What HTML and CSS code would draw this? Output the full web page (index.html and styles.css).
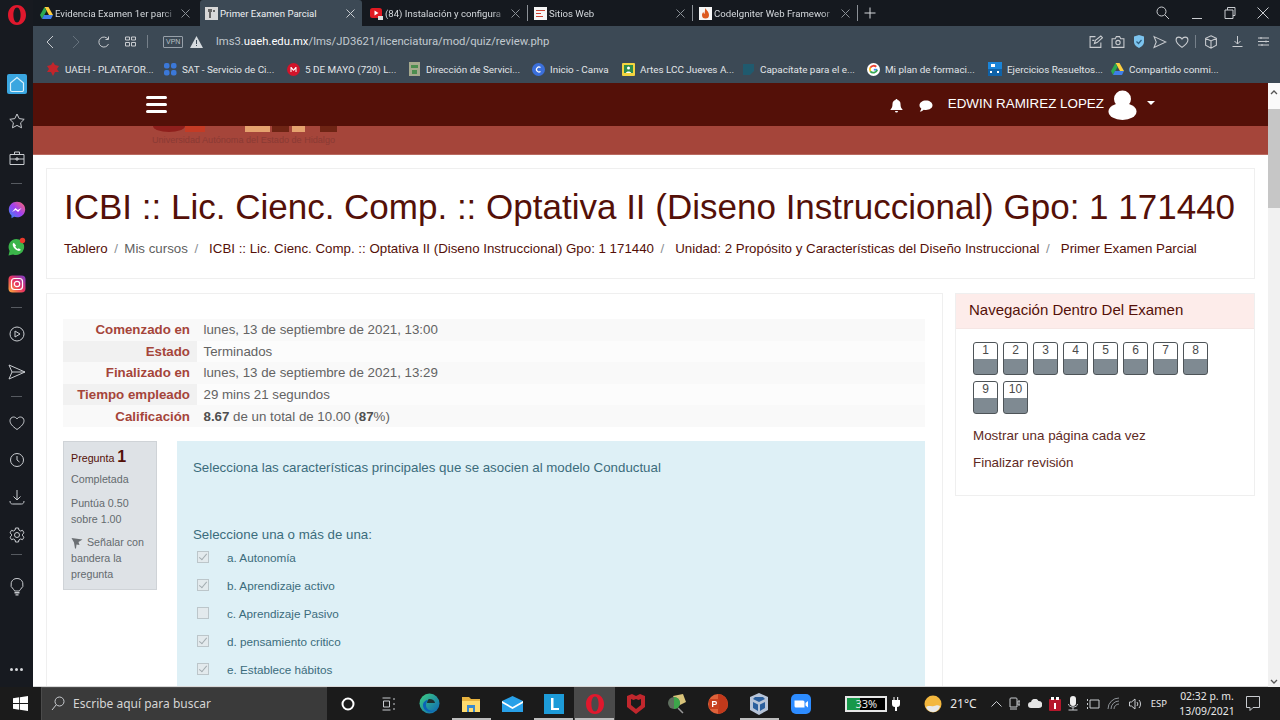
FILE: index.html
```html
<!DOCTYPE html>
<html lang="es">
<head>
<meta charset="utf-8">
<title>Primer Examen Parcial</title>
<link rel="stylesheet" href="styles.css">
</head>
<body>
<div class="window">
  <div class="upper">
    <aside class="sidebar">
      <div class="opera-slot">
        <svg width="20" height="22" viewBox="0 0 20 22"><path fill="#e0182d" fill-rule="evenodd" d="M10 1C4.500 1 1 5.500 1 11s3.500 10 9 10 9-4.500 9-10S15.500 1 10 1zm0 2.500c2.200 0 3.600 3.300 3.600 7.500s-1.400 7.500-3.600 7.500S6.400 15.200 6.400 11 7.800 3.500 10 3.500z"/></svg>
      </div>
      <div class="side-item home"><span class="home-box"><svg width="18" height="18" viewBox="0 0 18 18"><path fill="none" stroke="#d8f0fb" stroke-width="1.200" d="M2.500 8 9 2.500 15.500 8v7a1.500 1.500 0 0 1-1.500 1.500H4A1.500 1.500 0 0 1 2.500 15z"/></svg></span></div>
      <div class="side-item"><svg width="18" height="18" viewBox="0 0 18 18"><path class="ln" d="m9 2 2.200 4.600 5 .7-3.600 3.500.9 5L9 13.400l-4.500 2.400.9-5-3.600-3.500 5-.7z"/></svg></div>
      <div class="side-item"><svg width="18" height="18" viewBox="0 0 18 18"><path class="ln" d="M2 5.500h14v10H2zM6.500 5.500V3h5v2.500M2 10h14M8 9h2v2H8z"/></svg></div>
      <div class="side-sep"></div>
      <div class="side-item"><svg width="18" height="18" viewBox="0 0 18 18"><defs><linearGradient id="ms" x1="0" y1="1" x2="1" y2="0"><stop offset="0" stop-color="#2a8cf5"/><stop offset=".5" stop-color="#a03ff0"/><stop offset="1" stop-color="#ff6a6a"/></linearGradient></defs><path fill="url(#ms)" d="M9 .8C4.300.8.800 4.200.800 8.600c0 2.400 1 4.400 2.700 5.800v2.800l2.600-1.400c.9.300 1.900.4 2.900.4 4.700 0 8.200-3.400 8.200-7.800S13.700.8 9 .8z"/><path fill="#fff" d="m4 11 3.500-4 2.300 2 3.800-2-3.500 4-2.400-2z"/></svg></div>
      <div class="side-item"><svg width="20" height="20" viewBox="0 0 20 20"><path fill="#3bb54a" d="M9.500 2a8 8 0 0 0-6.900 12L1.500 18.500l4.600-1.100A8 8 0 1 0 9.500 2z"/><path fill="#fff" d="M6.800 5.800c-.9.500-1.300 1.500-1 2.700.6 2.400 2.900 4.800 5.300 5.300 1.300.3 2.300-.2 2.700-1.100l-2-1.500-1 .8c-1-.4-2.100-1.600-2.500-2.500l.8-1.100z"/><circle cx="15.500" cy="3.500" r="2.700" fill="#ea3a2c"/></svg></div>
      <div class="side-item"><svg width="18" height="18" viewBox="0 0 18 18"><defs><linearGradient id="ig" x1="0" y1="1" x2="1" y2="0"><stop offset="0" stop-color="#fdb13b"/><stop offset=".5" stop-color="#e8325f"/><stop offset="1" stop-color="#7a3fd0"/></linearGradient></defs><rect x=".5" y=".5" width="17" height="17" rx="4" fill="url(#ig)"/><rect x="3.500" y="3.500" width="11" height="11" rx="3" fill="none" stroke="#fff" stroke-width="1.200"/><circle cx="9" cy="9" r="2.700" fill="none" stroke="#fff" stroke-width="1.200"/></svg></div>
      <div class="side-sep s1"></div>
      <div class="side-item tall"><svg width="18" height="18" viewBox="0 0 18 18"><circle class="ln" cx="9" cy="9" r="7"/><path class="ln" d="M7 6v6l5-3z"/></svg></div>
      <div class="side-item"><svg width="20" height="18" viewBox="0 0 20 18"><path class="ln" d="m2 2 16 7-16 7 3-7zM5 9h13"/></svg></div>
      <div class="side-sep s2"></div>
      <div class="side-item"><svg width="18" height="18" viewBox="0 0 18 18"><path class="ln" d="M9 15.500C4 12 2 9.500 2 6.700 2 4.500 3.700 3 5.600 3 7 3 8.300 3.800 9 5c.7-1.200 2-2 3.400-2C14.300 3 16 4.500 16 6.700c0 2.800-2 5.300-7 8.800z"/></svg></div>
      <div class="side-item"><svg width="18" height="18" viewBox="0 0 18 18"><circle class="ln" cx="9" cy="9" r="6.500"/><path class="ln" d="M9 5v4l2.500 2"/></svg></div>
      <div class="side-item tall"><svg width="18" height="18" viewBox="0 0 18 18"><path class="ln" d="M9 2v10M5.500 8.500 9 12l3.500-3.500M2 13c0 2 1 3 2.500 3h9c1.500 0 2.500-1 2.500-3"/></svg></div>
      <div class="side-item"><svg width="18" height="18" viewBox="0 0 18 18"><path class="ln" d="m7.500 2-.4 2-1.700 1-1.900-.7L2 6.800l1.500 1.400v1.600L2 11.200l1.500 2.500 1.900-.7 1.700 1 .4 2h3l.4-2 1.700-1 1.900.7 1.500-2.500-1.500-1.400V8.200L16 6.800l-1.500-2.500-1.900.7-1.700-1-.4-2z"/><circle class="ln" cx="9" cy="9" r="2.500"/></svg></div>
      <div class="side-sep bulb-sep"></div>
      <div class="side-item bulb"><svg width="16" height="20" viewBox="0 0 16 20"><path class="ln" d="M8 1.500a6 6 0 0 0-3.500 10.900c.6.500 1 1.100 1 1.600h5c0-.5.400-1.100 1-1.600A6 6 0 0 0 8 1.500z"/><path fill="#c9ccd0" d="M5.500 15h5v1.500h-5zM6.500 17.200h3v1.300h-3z"/></svg></div>
      <div class="side-dots"><i></i><i></i><i></i></div>
    </aside>

    <div class="browser">
      <header class="tabbar">
        <div class="tab t1"><svg class="fav" width="13" height="12" viewBox="0 0 13 12"><path fill="#ffcf3f" d="M4.500 0h4l4.500 8H9z"/><path fill="#2da94f" d="M4.500 0 0 8l2 4 4.500-8z"/><path fill="#3f7ee8" d="M2 12h9l2-4H4z"/></svg><span class="tab-title">Evidencia Examen 1er parci</span><svg class="tab-x" width="9" height="9" viewBox="0 0 9 9"><path d="m.5.500 8 8M8.500.500l-8 8"/></svg></div>
        <div class="tab active"><svg class="fav" width="13" height="13" viewBox="0 0 13 13"><rect width="13" height="13" fill="#d8d8d8"/><path fill="#666" d="M3 2h4v3H6v6H4V5H3zM8 3h2v2H8z"/></svg><span class="tab-title">Primer Examen Parcial</span><svg class="tab-x" width="9" height="9" viewBox="0 0 9 9"><path d="m.5.500 8 8M8.500.500l-8 8"/></svg></div>
        <div class="tab t3"><svg class="fav" width="13" height="13" viewBox="0 0 13 13"><rect y="1" width="12" height="10" rx="2.500" fill="#e01a22"/><path fill="#fff" d="m4.500 3.500 4 2.500-4 2.500z"/><path fill="#ddd" d="M8 9h5v4H8z"/></svg><span class="tab-title">(84) Instalación y configura</span><svg class="tab-x" width="9" height="9" viewBox="0 0 9 9"><path d="m.5.500 8 8M8.500.500l-8 8"/></svg></div>
        <div class="tab sep"><svg class="fav" width="13" height="13" viewBox="0 0 13 13"><rect width="13" height="13" fill="#f5f5f5"/><path fill="#c43" d="M2 3h9v1H2zM2 6h5v1H2zM2 9h7v1H2z"/></svg><span class="tab-title">Sitios Web</span><svg class="tab-x" width="9" height="9" viewBox="0 0 9 9"><path d="m.5.500 8 8M8.500.500l-8 8"/></svg></div>
        <div class="tab sep"><svg class="fav" width="13" height="13" viewBox="0 0 13 13"><rect width="13" height="13" fill="#f7f7f7"/><path fill="#dd5a20" d="M6.500 1c.5 2 3.500 3.500 3.500 7a3.500 3.500 0 0 1-7 0c0-1.500.8-2.300 1.500-3 0 1 .3 1.500 1 2C6 5 5.800 3 6.500 1z"/></svg><span class="tab-title">CodeIgniter Web Framewor</span><svg class="tab-x" width="9" height="9" viewBox="0 0 9 9"><path d="m.5.500 8 8M8.500.500l-8 8"/></svg></div>
        <div class="tab-plus"><svg width="12" height="12" viewBox="0 0 12 12"><path stroke="#d5d8dc" d="M6 .5v11M.5 6h11"/></svg></div>
        <div class="win-ctrls">
          <svg width="14" height="14" viewBox="0 0 14 14"><circle class="ln" cx="5.500" cy="5.500" r="4.500"/><path class="ln" d="m9 9 4 4"/></svg>
          <svg width="12" height="14" viewBox="0 0 12 14"><path class="ln" d="M1 12.500h10"/></svg>
          <svg width="12" height="12" viewBox="0 0 12 12"><path class="ln" d="M1 3h8v8.500H1zM3.500 3V.5H11v8H9"/></svg>
          <svg width="12" height="12" viewBox="0 0 12 12"><path class="ln" d="m.5.500 11 11M11.500.500l-11 11"/></svg>
        </div>
      </header>

      <div class="addressbar">
        <svg width="8" height="14" viewBox="0 0 8 14"><path class="ln" d="M7 1 1 7l6 6"/></svg>
        <svg class="forward" width="8" height="14" viewBox="0 0 8 14"><path fill="none" stroke="#66727d" d="m1 1 6 6-6 6"/></svg>
        <svg class="reload" width="12" height="12" viewBox="0 0 12 12"><path class="ln" d="M10.500 8A5 5 0 1 1 10 3.200M10.500.500v3h-3"/></svg>
        <svg class="speed" width="11" height="11" viewBox="0 0 11 11"><path class="ln" d="M.5 1h4v3h-4zM6.500 1h4v3h-4zM.5 6.500h4V10h-4zM6.500 6.500h4V10h-4z"/></svg>
        <span class="bar-sep"></span>
        <span class="vpn">VPN</span>
        <svg class="warn" width="13" height="12" viewBox="0 0 13 12"><path fill="#d5dade" d="M6.500 0 13 12H0z"/><path fill="#3c4955" d="M6 4h1v4H6zM6 9h1v1H6z"/></svg>
        <div class="url">lms3.<b>uaeh.edu.mx</b>/lms/JD3621/licenciatura/mod/quiz/review.php</div>
        <div class="addr-tools">
          <svg width="14" height="14" viewBox="0 0 13 13"><path class="ln" d="M6 1.500H1v10h10V7M5 8l1-3 5-4 1.500 1.500-5 4.500zM3 5h2"/></svg>
          <svg width="14" height="14" viewBox="0 0 13 13"><path class="ln" d="M1 3.500h3l1-2h3l1 2h3v8H1z"/><circle class="ln" cx="6.500" cy="7" r="2"/></svg>
          <svg width="12" height="13" viewBox="0 0 12 13"><path fill="#7cc4ef" d="M1 1.500 6 0l5 1.500V7c0 3-3 5-5 6-2-1-5-3-5-6z"/><path fill="none" stroke="#2d5f82" stroke-width="1.200" d="m3.500 6.500 2 2 3-3.500"/></svg>
          <svg width="14" height="14" viewBox="0 0 13 13"><path class="ln" d="m1 1.500 11 5-11 5 2-5z"/></svg>
          <svg width="14" height="14" viewBox="0 0 13 13"><path class="ln" d="M6.500 11.500C3 9 1 7 1 4.700 1 3 2.300 2 3.600 2c1.200 0 2.300.7 2.900 1.800C7.100 2.700 8.200 2 9.400 2 10.700 2 12 3 12 4.700c0 2.300-2 4.300-5.500 6.800z"/></svg>
          <span class="bar-sep tool-sep"></span>
          <svg width="14" height="14" viewBox="0 0 13 13"><path class="ln" d="m6.500.8 5 2.200v6.500l-5 2.700-5-2.700V3zM1.500 3l5 2.500 5-2.500M6.500 5.500v7"/></svg>
          <svg class="wide-gap" width="13" height="13" viewBox="0 0 13 13"><path class="ln" d="M6.500 1v8M3.500 6l3 3 3-3M1.500 11.500h10"/></svg>
          <svg class="wide-gap" width="13" height="13" viewBox="0 0 13 13"><path class="ln" d="M1 3h11M1 6.500h11M1 10h11M4 2v2M9 5.500v2M5 9v2"/></svg>
        </div>
      </div>

      <nav class="bookmarks">
        <a class="bm w1"><svg width="14" height="14" viewBox="0 0 14 14"><path fill="#c2252b" d="m7 0 2 3 4 1-2 3 2 3-4 0-2 4-2-4-4 0 2-3-2-3 4-1z"/></svg>UAEH - PLATAFOR...</a>
        <a class="bm w2"><svg width="13" height="13" viewBox="0 0 13 13"><g fill="#3b78d8"><rect x="0" width="5.500" height="5.500" rx="2"/><rect x="7" width="5.500" height="5.500" rx="2"/><rect y="7" width="5.500" height="5.500" rx="2"/><rect x="7" y="7" width="5.500" height="5.500" rx="2"/></g></svg>SAT - Servicio de Ci...</a>
        <a class="bm w3"><svg width="13" height="13" viewBox="0 0 13 13"><circle cx="6.500" cy="6.500" r="6.500" fill="#d2142a"/><path fill="#fff" d="M3.500 9V4h1l2 2.500L8.500 4h1v5h-1V6L6.500 8 4.500 6v3z"/></svg>5 DE MAYO (720) L...</a>
        <a class="bm w4"><svg width="13" height="14" viewBox="0 0 13 14"><rect x="1" width="11" height="14" fill="#a5a98d"/><path fill="#4c8d4f" d="M3 3h7v3H3zM4 8h5v4H4z"/></svg>Dirección de Servici...</a>
        <a class="bm w5"><svg width="13" height="13" viewBox="0 0 13 13"><circle cx="6.500" cy="6.500" r="6.500" fill="#3b6fdb"/><path fill="none" stroke="#fff" stroke-width="1.200" d="M8.500 4.500a2.500 2.500 0 1 0 0 4"/></svg>Inicio - Canva</a>
        <a class="bm w6"><svg width="13" height="13" viewBox="0 0 13 13"><rect width="13" height="13" rx="1" fill="#f3d43f"/><rect x="2" y="2" width="9" height="8" fill="#2f8c4c"/><circle cx="6.500" cy="5" r="1.500" fill="#fff"/><path fill="#fff" d="M4 10c0-2 5-2 5 0z"/></svg>Artes LCC Jueves A...</a>
        <a class="bm w7"><svg width="13" height="13" viewBox="0 0 13 13"><path fill="#205a6e" d="M1 1h11v7l-4 4H1z"/></svg>Capacítate para el e...</a>
        <a class="bm w8"><svg width="13" height="13" viewBox="0 0 13 13"><circle cx="6.500" cy="6.500" r="6.500" fill="#fff"/><path fill="none" stroke="#4285f4" stroke-width="1.800" d="M10.200 6.700H6.800"/><path fill="none" stroke="#ea4335" stroke-width="1.800" d="M9.300 3.700a4 4 0 0 0-6 1"/><path fill="none" stroke="#fbbc05" stroke-width="1.800" d="M3.300 4.700a4 4 0 0 0 0 3.600"/><path fill="none" stroke="#34a853" stroke-width="1.800" d="M3.300 8.300a4 4 0 0 0 6.900-1.600"/></svg>Mi plan de formaci...</a>
        <a class="bm w9"><svg width="14" height="14" viewBox="0 0 14 14"><rect width="14" height="14" fill="#1a84d8"/><rect y="7" width="14" height="7" fill="#0f62a8"/><path fill="#fff" d="M2 9h2v2H2zM9 9h2v2H9zM3 2h4v3H3z"/></svg>Ejercicios Resueltos...</a>
        <a class="bm"><svg width="13" height="12" viewBox="0 0 13 12"><path fill="#ffcf3f" d="M4.500 0h4l4.500 8H9z"/><path fill="#2da94f" d="M4.500 0 0 8l2 4 4.500-8z"/><path fill="#3f7ee8" d="M2 12h9l2-4H4z"/></svg>Compartido conmi...</a>
      </nav>

      <div class="viewport">
        <div class="page">
          <div class="topnav">
            <div class="burger"><i></i><i></i><i></i></div>
            <div class="topnav-right">
              <svg class="bell" width="13" height="14" viewBox="0 0 13 14"><path fill="#fff" d="M6.500 0c.7 0 1 .5 1 1.100C9.500 1.600 10.500 3 10.500 5c0 3 .8 4.300 2 5.500V11H.5v-.5C1.700 9.300 2.500 8 2.500 5c0-2 1-3.400 3-3.900C5.500.5 5.800 0 6.500 0zM5 12h3a1.500 1.500 0 0 1-3 0z"/></svg>
              <svg class="chat" width="14" height="12" viewBox="0 0 14 12"><path fill="#fff" d="M7 .5c3.600 0 6.500 2.100 6.500 4.800S10.600 10 7 10c-.8 0-1.500-.1-2.200-.3C4 10.500 2.500 11.500.8 11.500c.9-.9 1.400-1.900 1.500-2.900C1 7.700.5 6.600.5 5.300.5 2.600 3.400.5 7 .5z"/></svg>
              <span class="username">EDWIN RAMIREZ LOPEZ</span>
              <svg class="avatar" width="29" height="30" viewBox="0 0 29 30"><circle cx="14.500" cy="9" r="8.500" fill="#fff"/><ellipse cx="14.500" cy="21.500" rx="14" ry="8.500" fill="#fff"/></svg>
              <span class="caret"></span>
            </div>
          </div>
          <div class="band">
            <div class="logo-strip"><i class="l1"></i><i class="l2"></i><i class="l3"></i><i class="l4"></i><i class="l5"></i><i class="l6"></i></div>
            <div class="logo-text">Universidad Autónoma del Estado de Hidalgo</div>
          </div>

          <div class="content">
            <section class="card head-card">
              <h1>ICBI :: Lic. Cienc. Comp. :: Optativa II (Diseno Instruccional) Gpo: 1 171440</h1>
              <ol class="crumbs">
                <li>Tablero</li>
                <li class="muted">Mis cursos</li>
                <li>ICBI :: Lic. Cienc. Comp. :: Optativa II (Diseno Instruccional) Gpo: 1 171440</li>
                <li>Unidad: 2 Propósito y Características del Diseño Instruccional</li>
                <li>Primer Examen Parcial</li>
              </ol>
            </section>

            <div class="columns">
              <main class="card main-card">
                <table class="summary">
                  <tr><th>Comenzado en</th><td>lunes, 13 de septiembre de 2021, 13:00</td></tr>
                  <tr class="alt"><th>Estado</th><td>Terminados</td></tr>
                  <tr><th>Finalizado en</th><td>lunes, 13 de septiembre de 2021, 13:29</td></tr>
                  <tr class="alt"><th>Tiempo empleado</th><td>29 mins 21 segundos</td></tr>
                  <tr><th>Calificación</th><td><b>8.67</b> de un total de 10.00 (<b>87</b>%)</td></tr>
                </table>
                <div class="question">
                  <div class="q-info">
                    <div class="q-no">Pregunta <b>1</b></div>
                    <div class="q-line first">Completada</div>
                    <div class="q-line">Puntúa 0.50 sobre 1.00</div>
                    <div class="q-flag"><svg width="12" height="12" viewBox="0 0 12 12"><path fill="#6b6f73" d="M.5 1 11.500 2.500 7.500 5l1 3-3-.5L5 11.500H4L3 5.500z"/></svg> Señalar con bandera la pregunta</div>
                  </div>
                  <div class="q-body">
                    <p class="q-text">Selecciona las características principales que se asocien al modelo Conductual</p>
                    <p class="q-prompt">Seleccione una o más de una:</p>
                    <label class="opt"><input type="checkbox" checked disabled><span>a. Autonomía</span></label>
                    <label class="opt"><input type="checkbox" checked disabled><span>b. Aprendizaje activo</span></label>
                    <label class="opt"><input type="checkbox" disabled><span>c. Aprendizaje Pasivo</span></label>
                    <label class="opt"><input type="checkbox" checked disabled><span>d. pensamiento critico</span></label>
                    <label class="opt"><input type="checkbox" checked disabled><span>e. Establece hábitos</span></label>
                  </div>
                </div>
              </main>
              <aside class="card nav-card">
                <h2>Navegación Dentro Del Examen</h2>
                <div class="nav-body">
                  <div class="qnav">
                    <span class="qbtn">1</span><span class="qbtn">2</span><span class="qbtn">3</span><span class="qbtn">4</span><span class="qbtn">5</span><span class="qbtn">6</span><span class="qbtn">7</span><span class="qbtn">8</span><span class="qbtn">9</span><span class="qbtn">10</span>
                  </div>
                  <p class="nav-link">Mostrar una página cada vez</p>
                  <p class="nav-link">Finalizar revisión</p>
                </div>
              </aside>
            </div>
          </div>
        </div>
        <div class="scrollbar">
          <div class="sb-btn"><svg width="8" height="5" viewBox="0 0 8 5"><path fill="none" stroke="#555" stroke-width="1.300" d="m1 4 3-3 3 3"/></svg></div>
          <div class="sb-thumb"></div>
          <div class="sb-track"></div>
          <div class="sb-btn down"><svg width="8" height="5" viewBox="0 0 8 5"><path fill="none" stroke="#555" stroke-width="1.300" d="m1 1 3 3 3-3"/></svg></div>
        </div>
      </div>
    </div>
  </div>

  <footer class="taskbar">
    <div class="start"><svg width="15" height="15" viewBox="0 0 15 15"><path fill="#fff" d="M0 2.200 6.200 1.300v5.800H0zM7 1.200 15 0v7.100H7zM0 7.900h6.200v5.800L0 12.800zM7 7.900h8V15l-8-1.200z"/></svg></div>
    <div class="search"><svg width="14" height="15" viewBox="0 0 14 15"><circle class="ln" cx="8.500" cy="5.500" r="4.500"/><path class="ln" d="M5.300 8.700 1 14"/></svg><span>Escribe aquí para buscar</span></div>
    <div class="tb-app"><svg width="14" height="14" viewBox="0 0 14 14"><circle cx="7" cy="7" r="5.500" fill="none" stroke="#fff" stroke-width="2"/></svg></div>
    <div class="tb-app"><svg width="14" height="14" viewBox="0 0 14 14"><path class="ln" d="M.5 1h8M.5 13h8M1.500 4h6v6h-6zM12 1v2M12 6v2M12 11v2"/></svg></div>
    <div class="tb-app"><svg width="21" height="21" viewBox="0 0 21 21"><defs><linearGradient id="ed" x1="0" y1="0" x2="1" y2="1"><stop offset="0" stop-color="#3fd07f"/><stop offset="1" stop-color="#0b62b8"/></linearGradient></defs><circle cx="10.500" cy="10.500" r="10" fill="url(#ed)"/><path fill="#1c1c1c" d="M10.500 6c3 0 5 1.500 5.500 4H8c.2-2 1-4 2.500-4z" opacity=".85"/><path fill="#0b62b8" d="M7 12c0 4 4 7 9 5-5 4-12 1-12-5 0-3 3-5 5-5-1 1-2 3-2 5z"/></svg></div>
    <div class="tb-app running"><svg width="18" height="16" viewBox="0 0 18 16"><path fill="#e8b33f" d="M0 1h7l2 2h9v13H0z"/><path fill="#ffdb6e" d="M0 5h18v11H0z"/><path fill="#3b8ad0" d="M5 9h8v7h-2v-4H7v4H5z"/></svg></div>
    <div class="tb-app"><svg width="21" height="16" viewBox="0 0 21 16"><path fill="#28a0e8" d="M0 5 10.500 0 21 5v11H0z"/><path fill="#fff" d="m0 5 10.500 6L21 5v2l-10.500 6L0 7z"/></svg></div>
    <div class="tb-app running"><svg width="20" height="20" viewBox="0 0 20 20"><rect width="20" height="20" fill="#1d9bd8"/><path fill="#fff" d="M7 4h2.500v10H15v2H7z"/></svg></div>
    <div class="tb-app active running"><svg width="20" height="22" viewBox="0 0 20 22"><path fill="#e0182d" fill-rule="evenodd" d="M10 1C4.500 1 1 5.500 1 11s3.500 10 9 10 9-4.500 9-10S15.500 1 10 1zm0 2.500c2.200 0 3.600 3.300 3.600 7.500s-1.400 7.500-3.600 7.500S6.400 15.200 6.400 11 7.800 3.500 10 3.500z"/></svg></div>
    <div class="tb-app"><svg width="18" height="20" viewBox="0 0 18 20"><path fill="#c1272d" fill-rule="evenodd" d="M0 2 5 0l4 2 4-2 5 2v11l-9 7-9-7zm4 3v6l5 4 5-4V5l-2.500 1L9 5 6.500 6z"/></svg></div>
    <div class="tb-app"><svg width="20" height="20" viewBox="0 0 20 20"><path fill="#d8c37a" d="M6 2 16 0l3 8-8 4z"/><circle cx="7" cy="9" r="6" fill="#5f6f5f"/><path fill="#3ca64a" d="M7 3a6 6 0 0 1 0 12z"/><path stroke="#999" stroke-width="1.500" d="m11 14 5 5"/></svg></div>
    <div class="tb-app"><svg width="20" height="20" viewBox="0 0 20 20"><circle cx="10" cy="10" r="10" fill="#e0623a"/><path fill="#c2391b" d="M10 0a10 10 0 0 1 0 20z"/><rect x="1" y="5" width="10" height="10" rx="1" fill="#c8401f"/><path fill="#fff" d="M4 7h3a2 2 0 0 1 0 4H5.300v2H4zm1.300 1.200v1.700H7a.85.85 0 0 0 0-1.700z"/></svg></div>
    <div class="tb-app running"><svg width="18" height="22" viewBox="0 0 18 22"><path fill="#b7c4d8" d="m9 0 9 4v13l-9 5-9-5V4z"/><path fill="#2a5f9e" d="M5 4h8l2 2-6 3-6-3zM3 9l5 2.500V18l-5-3zM15 9l-5 2.500V18l5-3z"/></svg></div>
    <div class="tb-app"><svg width="20" height="20" viewBox="0 0 20 20"><rect width="20" height="20" rx="5" fill="#2d8cff"/><path fill="#fff" d="M3.500 6.500h8.500a1.500 1.500 0 0 1 1.500 1.500v5.500H5A1.500 1.500 0 0 1 3.500 12zM14.500 9 17 7v6.500l-2.500-2z"/></svg></div>

    <div class="battery"><span class="batt-fill"></span><span class="batt-text">33%</span></div>
    <svg class="plug" width="8" height="14" viewBox="0 0 8 14"><path fill="#fff" d="M1.500 0h1v3h2.600V0h1.100v3H8v4a3 3 0 0 1-3 3v4H3v-4a3 3 0 0 1-3-3V3h1.500z"/></svg>
    <svg class="weather" width="18" height="18" viewBox="0 0 18 18"><circle cx="9" cy="9" r="8.500" fill="#f3b73e"/><path fill="#e8e8e8" d="M2 12c3-2 5 0 8-1s4-1 6 0c-1 4-4 6-7 6s-6-2-7-5z"/></svg>
    <span class="temp">21°C</span>
    <div class="tray">
      <svg width="11" height="6" viewBox="0 0 11 6"><path class="ln" d="m.5 5.500 5-5 5 5"/></svg>
      <svg width="11" height="14" viewBox="0 0 11 14"><path class="ln" d="M2 1h5a1 1 0 0 1 1 1v8H1V2a1 1 0 0 1 1-1zM9 4h2v4H9zM1 12h7"/></svg>
      <svg width="14" height="9" viewBox="0 0 14 9"><path fill="#e4e4e4" d="M3 9a3 3 0 0 1 0-6 4 4 0 0 1 7.500-1A3.500 3.500 0 0 1 11 9z"/></svg>
      <svg width="12" height="14" viewBox="0 0 12 14"><rect y="2" width="12" height="12" rx="1" fill="#b5172b"/><path fill="#fff" d="M2 0h3v3H2zM7 0h3v3H7zM5 6h2v6H5z"/></svg>
      <svg width="10" height="15" viewBox="0 0 10 15"><rect x="2" width="6" height="10" rx="3" fill="#eee"/><path class="ln" d="M5 11v3M.5 14h9M.5 8c0 2 2 3 4.500 3s4.500-1 4.500-3"/></svg>
      <svg width="14" height="12" viewBox="0 0 14 12"><path class="ln" d="M4 2h9v8H4zM1.500 1v2M1.500 5v2M1.500 9v2"/></svg>
      <svg width="14" height="13" viewBox="0 0 14 13"><path class="ln dim" d="M1 12a11 11 0 0 1 11-11M4 12a8 8 0 0 1 8-8M7 12a5 5 0 0 1 5-5"/></svg>
      <svg width="13" height="12" viewBox="0 0 13 12"><path class="ln" d="M.5 4h2L6 1v10L2.500 8h-2zM8 4a3 3 0 0 1 0 4M10 2a6 6 0 0 1 0 8"/></svg>
    </div>
    <span class="lang">ESP</span>
    <div class="clock"><span>02:32 p. m.</span><span>13/09/2021</span></div>
    <svg class="notif" width="14" height="15" viewBox="0 0 14 15"><path class="ln" d="M.5.500h13v11H7l-3 3v-3H.5z"/></svg>
  </footer>
</div>
</body>
</html>
```

FILE: styles.css
```css
* { box-sizing: border-box; }
html, body { margin: 0; height: 100%; overflow: hidden; }
body { font-family: "Liberation Sans", Arial, sans-serif; background: #fff; }
svg { flex: none; display: block; }
.ln { fill: none; stroke: #c9ccd0; stroke-width: 1; }
.ln.dim { stroke: #8f9499; }

.window { width: 1280px; height: 720px; display: flex; flex-direction: column; }
.upper { flex: 1; min-height: 0; display: flex; }

/* Opera sidebar */
.sidebar { width: 33px; flex: none; background: #171a20; display: flex; flex-direction: column; align-items: center; }
.opera-slot { height: 65px; padding-top: 4px; display: flex; justify-content: center; align-items: flex-start; }
.side-item { height: 37px; flex: none; display: flex; align-items: center; justify-content: center; }
.side-item.tall { height: 38px; }
.home-box { width: 20px; height: 20px; background: #3aa6e0; border-radius: 2px; display: flex; align-items: center; justify-content: center; }
.side-sep { height: 15px; width: 11px; flex: none; background: linear-gradient(#0000 7px, #565a60 7px, #565a60 8px, #0000 8px); }
.side-sep.s1 { height: 13px; background: linear-gradient(#0000 5px, #565a60 5px, #565a60 6px, #0000 6px); }
.side-sep.s2 { height: 14px; background: linear-gradient(#0000 6px, #565a60 6px, #565a60 7px, #0000 7px); }
.side-sep.bulb-sep { height: 1px; margin-top: 1px; background: #565a60; }
.bulb { margin-top: 13px; }
.side-dots { margin-top: auto; padding-bottom: 16px; display: flex; gap: 2px; }
.side-dots i { width: 3px; height: 3px; border-radius: 50%; background: #d5d7da; }

.browser { flex: 1; min-width: 0; display: flex; flex-direction: column; }

/* Tabs */
.tabbar { height: 26px; flex: none; background: #15191f; display: flex; align-items: stretch; color: #d5d9dd; font: 9.6px Roboto, sans-serif; }
.tab { width: 165px; display: flex; align-items: center; gap: 2px; padding: 0 7px; position: relative; }
.tab.t1 { width: 167px; padding-right: 10px; }
.tab.t3 { padding-left: 8px; }
.tab.active { width: 162px; padding-left: 5px; background: #3c4955; color: #eef0f2; border-radius: 3px 3px 0 0; }
.tab.sep::before { content: ""; position: absolute; left: 0; top: 5px; bottom: 5px; width: 1px; background: #8b9096; }
.tab-title { flex: 1; min-width: 0; white-space: nowrap; overflow: hidden;
  -webkit-mask-image: linear-gradient(90deg, #000 88%, transparent); mask-image: linear-gradient(90deg, #000 88%, transparent); }
.tab.active .tab-title { -webkit-mask-image: none; mask-image: none; }
.tab-x { stroke: #8a9096; fill: none; margin-left: 2px; }
.tab.active .tab-x { stroke: #c8ccd0; }
.tab-plus { width: 26px; display: flex; align-items: center; justify-content: center; position: relative; }
.tab-plus::before { content: ""; position: absolute; left: 0; top: 5px; bottom: 5px; width: 1px; background: #8b9096; }
.win-ctrls { margin-left: auto; display: flex; align-items: center; gap: 21px; padding-right: 11px; }

/* Address bar */
.addressbar { height: 31px; flex: none; background: #3c4955; display: flex; align-items: center; padding-left: 13px; color: #c8cfd6; }
.forward { margin-left: 18px; }
.reload { margin-left: 18px; }
.speed { margin-left: 15px; }
.bar-sep { width: 1px; height: 13px; background: #76808a; margin-left: 11px; }
.vpn { margin-left: 15px; font: 7px "Liberation Sans", sans-serif; border: 1px solid #97a0a9; border-radius: 1px; padding: 1px 2px; color: #b9c0c7; width: 20px; height: 12px; line-height: 8px; text-align: center; }
.warn { margin-left: 7px; }
.url { margin-left: 13px; font: 11.3px Roboto, sans-serif; color: #c2c9d0; white-space: nowrap; }
.url b { font-weight: 400; color: #fff; }
.addr-tools { margin-left: auto; display: flex; align-items: center; gap: 8px; padding-right: 10px; }
.addr-tools .wide-gap { margin-left: 5px; }
.bar-sep.tool-sep { margin: 0 0 0 -2px; }

/* Bookmarks */
.bookmarks { height: 26px; flex: none; background: #3c4955; display: flex; align-items: center; padding: 0 0 2px 13px; overflow: hidden; }
.bm { display: flex; align-items: center; gap: 5px; font: 9.9px Roboto, sans-serif; color: #e2e5e8; white-space: nowrap; flex: none; }
.w1 { width: 118px; } .w2 { width: 123px; } .w3 { width: 121px; } .w4 { width: 124px; } .w5 { width: 90px; }
.w6 { width: 120px; } .w7 { width: 125px; } .w8 { width: 121px; } .w9 { width: 123px; }

/* Viewport */
.viewport { flex: 1; min-height: 0; display: flex; }
.page { flex: 1; min-width: 0; overflow: hidden; background: #fff; border-bottom: 1px solid #d8d8d8; }
.scrollbar { width: 12px; flex: none; background: #f1f1f1; display: flex; flex-direction: column; }
.sb-btn { height: 26px; background: #fafafa; display: flex; justify-content: center; padding-top: 7px; }
.sb-btn.down { height: 12px; padding-top: 4px; background: #f1f1f1; }
.sb-thumb { height: 99px; background: #c6c6c6; }
.sb-track { flex: 1; }

.topnav { height: 43px; background: #541008; display: flex; align-items: center; padding: 0 113px 0 113px; }
.burger { width: 21px; display: flex; flex-direction: column; gap: 4px; }
.burger i { height: 3px; border-radius: 2px; background: #fff; }
.topnav-right { margin-left: auto; display: flex; align-items: center; }
.bell { margin-top: 2px; }
.chat { margin: 3px 0 0 16px; }
.username { color: #fff; font-size: 13.4px; margin: -3px 4px 0 15px; }
.avatar { margin-top: 1px; }
.caret { width: 0; height: 0; border: 4px solid transparent; border-top-color: #fff; border-bottom-width: 0; margin: -3px 0 0 10px; }

.band { height: 29px; background: #a5453a; border-bottom: 1px solid #b96a60; padding-left: 119px; }
.logo-strip { height: 6px; display: flex; }
.logo-strip i { display: block; height: 6px; }
.l1 { width: 32px; background: #8f1f1c; border-radius: 0 0 16px 16px / 0 0 6px 6px; margin-left: 1px; }
.l2 { width: 20px; background: #c43b25; }
.l3 { width: 25px; margin-left: 40px; background: #e5a26e; }
.l4 { width: 17px; margin-left: 2px; background: #6e2414; }
.l5 { width: 13px; margin-left: 3px; background: #e5a26e; }
.l6 { width: 17px; margin-left: 15px; background: #6e2414; }
.logo-text { font-size: 9.1px; line-height: 11px; margin-top: 3px; color: #8a3a34; white-space: nowrap; }

.content { padding: 13px 13px 0; }
.card { background: #fff; border: 1px solid #efefef; }
.head-card { height: 111px; padding: 19px 17px 0; }
h1 { margin: 0; font-size: 35px; font-weight: 400; line-height: 38px; color: #541008; white-space: nowrap; }
.crumbs { list-style: none; margin: 13px 0 0; padding: 0; display: flex; font-size: 13.3px; line-height: 20px; color: #541008; white-space: nowrap; }
.crumbs li + li::before { content: "/"; color: #8a8f94; padding: 0 6.5px; }
.crumbs .muted { color: #5f5f5f; }
.crumbs li:nth-child(n+3)::before { padding-right: 11px; }

.columns { display: flex; gap: 12px; margin-top: 14px; align-items: flex-start; }
.main-card { width: 897px; height: 420px; padding: 25px 17px 0 16px; overflow: hidden; }
.summary { width: 862px; border-collapse: collapse; font-size: 13.3px; color: #636363; }
.summary tr { height: 21.6px; background: #f9f9f9; }
.summary th { width: 134px; padding: 0 7px 0 0; text-align: right; color: #a5453a; white-space: nowrap; }
.summary td { padding: 0 0 0 6.5px; }
.summary .alt { background: #fcfcfc; }
.summary .alt th { background: #f1f1f1; }
.summary b { color: #4f4f4f; }

.question { display: flex; margin-top: 14px; gap: 20px; align-items: flex-start; }
.q-info { width: 94px; height: 149px; flex: none; background: #dee2e6; border: 1px solid #cfd3d7; padding: 7px 7px 0; font-size: 10.7px; line-height: 16px; color: #646a6e; }
.q-no { color: #541008; line-height: 16px; }
.q-no b { font-size: 16px; }
.q-line { margin-top: 8px; }
.q-line.first { margin-top: 5px; }
.q-flag { margin-top: 7px; }
.q-flag svg { display: inline-block; vertical-align: -3px; margin-right: 1px; }
.q-body { width: 748px; height: 300px; background: #def0f6; padding: 17px 16px; color: #3b6c7c; font-size: 13.3px; }
.q-text { margin: 0; line-height: 19px; }
.q-prompt { margin: 48px 0 0; line-height: 19px; }
.opt { display: flex; align-items: center; height: 28px; padding-left: 4px; font-size: 11.7px; }
.opt input { appearance: none; -webkit-appearance: none; position: relative; width: 12px; height: 12px; margin: -1px 18px 0 0; flex: none; background: #e3eaed; border: 1px solid #bcc6ca; }
.opt input:checked::before { content: ""; position: absolute; left: 3px; top: 0; width: 3px; height: 7px; border: solid #a3adb1; border-width: 0 1px 1px 0; transform: rotate(40deg); }

.nav-card { width: 300px; height: 203px; }
h2 { margin: 0; height: 35px; padding: 0 13px; font-size: 15px; line-height: 32px; font-weight: 400; color: #541008; background: #fdecea; border-bottom: 1px solid #f5e6e4; }
.nav-body { padding: 13px 17px 0; }
.qnav { display: flex; flex-wrap: wrap; gap: 6px 5px; width: 240px; }
.qbtn { width: 25px; height: 33px; border: 1px solid #4e5458; border-radius: 3px; font-size: 12px; line-height: 14px; text-align: center; color: #4a4a4a;
  background: linear-gradient(#fff 16px, #7f8a92 16px); }
.nav-link { margin: 0; font-size: 13.4px; line-height: 20px; color: #5e2a24; }
.qnav + .nav-link { margin-top: 12px; }
.nav-link + .nav-link { margin-top: 7px; }

/* Taskbar */
.taskbar { height: 33px; flex: none; background: #1b1b1b; display: flex; align-items: center; color: #e8e8e8; font-family: "Noto Sans", sans-serif; }
.start { width: 41px; display: flex; justify-content: center; }
.search { width: 286px; height: 33px; background: #3a3a3a; border: 1px solid #4b4b4b; border-width: 1px 0 0 1px; display: flex; align-items: center; gap: 8px; padding: 0 0 1px 9px; font-size: 12px; color: #d5d5d5; }
.tb-app { width: 41.2px; height: 33px; display: flex; align-items: center; justify-content: center; flex: none; position: relative; }
.tb-app.active { background: #4a4a4a; }
.tb-app.running::after { content: ""; position: absolute; left: 1px; right: 1px; bottom: 0; height: 2px; background: #bdbdbd; }
.battery { width: 42px; height: 16px; margin-left: 24px; border: 2px solid #e6e6e6; position: relative; font-size: 11px; line-height: 12px; text-align: center; background: #000; }
.batt-fill { position: absolute; left: 0; top: 0; bottom: 0; width: 13px; background: #17984a; }
.batt-text { position: relative; }
.plug { margin-left: 5px; }
.weather { margin-left: 24px; }
.temp { margin-left: 8px; font-size: 12px; }
.tray { display: flex; align-items: center; width: 151px; margin-left: 14px; justify-content: space-between; }
.lang { margin-left: 9px; font-size: 9.5px; }
.clock { margin-left: 14px; width: 52px; display: flex; flex-direction: column; align-items: center; font-size: 10.4px; line-height: 15px; white-space: nowrap; }
.notif { margin-left: 13px; }
```
